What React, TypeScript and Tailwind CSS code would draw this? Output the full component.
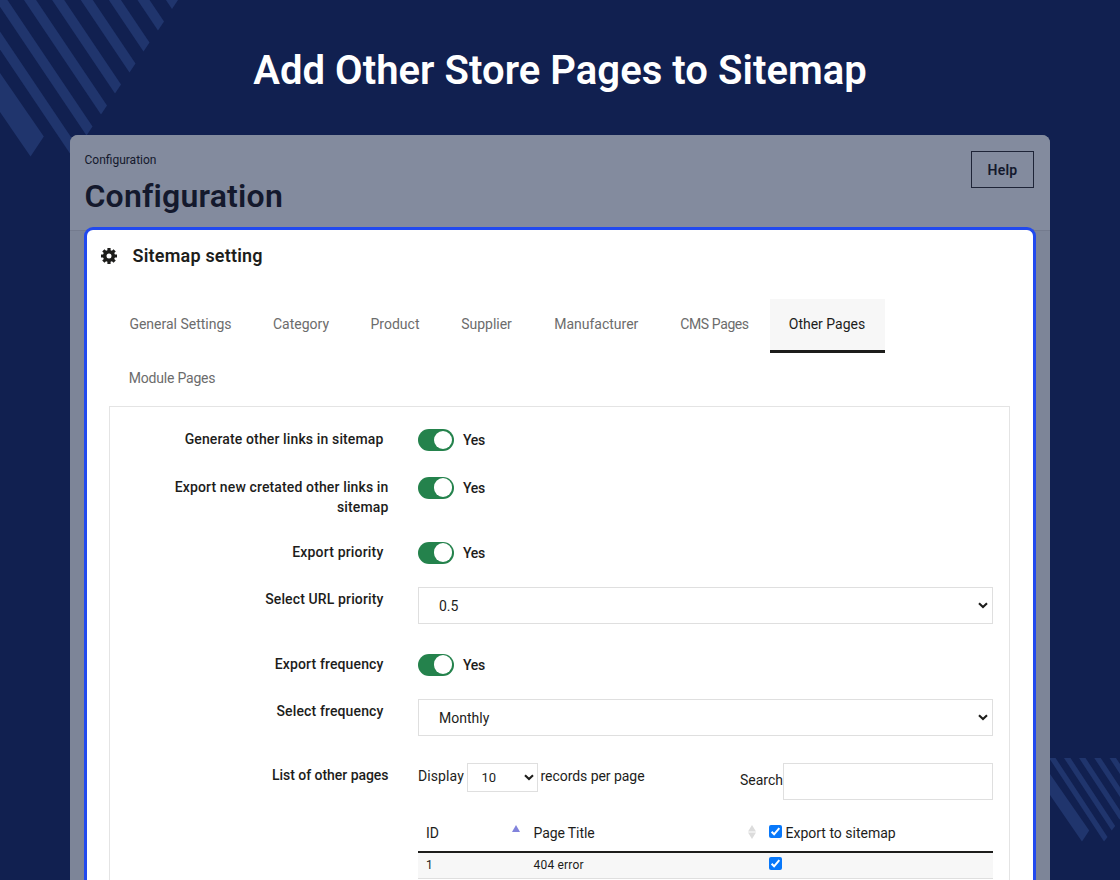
import React from 'react';

const tabs = [
  { label: 'General Settings', width: 'w-[143px]' },
  { label: 'Category', width: 'w-[98px]' },
  { label: 'Product', width: 'w-[90px]' },
  { label: 'Supplier', width: 'w-[93px]' },
  { label: 'Manufacturer', width: 'w-[126.5px]' },
  { label: 'CMS Pages', width: 'w-[110px]', text: 'tracking-[-0.4px]' },
  { label: 'Other Pages', width: 'w-[115px]', active: true },
  { label: 'Module Pages', width: 'w-[126px]', text: 'tracking-[-0.2px]' },
];

// right hand corner of every stripe
const topStripes = [[78, 147.5], [92.5, 126.5], [107, 105.5], [121, 84.5], [135.5, 63.5], [149.5, 42.5], [164, 21.5], [178, 0]];
const bottomStripes = [[57.5, 79], [65.2, 68], [73, 57], [81, 46], [89, 35]];

const Stripes: React.FC = () => (
  <>
    <svg className="absolute left-0 top-0" width="200" height="160" viewBox="0 0 200 160" fill="#20356d">
      <path d="M0 73 43.8 136.5 30.5 156.5 0 112z" />
      {topStripes.map(([x, y]) => (
        <path key={x} d={`M${x} ${y}l-6 9-200-297.4h12.1z`} />
      ))}
    </svg>
    <svg className="absolute left-[1050px] top-[758px]" width="70" height="90" viewBox="0 0 70 90" fill="#20356d">
      <path d="M0 16 39.2 72.5 32 83.5 0 37z" />
      {bottomStripes.map(([x, y]) => (
        <path key={x} d={`M${x} ${y}l-3.5 4.5-100-152h6.5z`} />
      ))}
    </svg>
  </>
);

const Gear: React.FC = () => (
  <svg className="mt-[4px]" width="16" height="16" viewBox="0 0 16 16" stroke="#1d1d1b">
    <circle cx="8" cy="8" r="4.3" fill="none" strokeWidth="3.6" />
    {[0, 45, 90, 135].map((angle) => (
      <path key={angle} d="M8 0v3M8 13v3" strokeWidth="3.2" transform={`rotate(${angle} 8 8)`} />
    ))}
  </svg>
);

const Toggle: React.FC = () => (
  <div className="-mt-px flex items-center">
    <span className="flex h-[22px] w-[35.5px] items-center justify-end rounded-full bg-[#24824c] pr-[1.5px]">
      <span className="size-[18.5px] rounded-full bg-white" />
    </span>
    <span className="ml-[9.5px] mt-px font-medium tracking-[-0.3px]">Yes</span>
  </div>
);

const Chevron: React.FC = () => (
  <svg width="10" height="7" viewBox="0 0 10 7" fill="none" stroke="#1d1d1b" strokeWidth="2.1">
    <path d="M1 1.2 5 5 9 1.2" />
  </svg>
);

const Select: React.FC<{ value: string }> = ({ value }) => (
  <div className="-mt-[3px] flex h-[37px] w-[575px] items-center justify-between border border-[#dfdfdf] pl-5 pr-[4px]">
    <span className="pt-px">{value}</span>
    <Chevron />
  </div>
);

const Check: React.FC = () => (
  <span className="flex size-[13px] shrink-0 items-center justify-center rounded-[2px] bg-[#0878fa]">
    <svg width="11" height="11" viewBox="0 0 11 11" fill="none" stroke="#fff" strokeWidth="2">
      <path d="M1.6 5.8 4.1 8.3 9.3 2.2" />
    </svg>
  </span>
);

const Row: React.FC<{ label: string; height: string; wide?: boolean; spacing?: string; children: React.ReactNode }> = ({
  label,
  height,
  wide,
  spacing = 'tracking-[0.13px]',
  children,
}) => (
  <div className={`flex ${height}`}>
    <div className={`-mt-px shrink-0 text-right font-medium leading-5 ${spacing} ${wide ? 'mr-[29.5px] w-[278.5px] pl-14' : 'mr-[34.5px] w-[273.5px]'}`}>
      {label}
    </div>
    <div>{children}</div>
  </div>
);

const PagesTable: React.FC = () => (
  <div className="-mt-[3px] w-[575px]">
    <div className="flex items-start justify-between">
      <div className="flex items-center">
        <span className="-mt-[3px] w-[49px] tracking-[0.1px]">Display</span>
        <div className="flex h-[29px] w-[70.5px] items-center justify-between border border-[#dfdfdf] pl-[13.5px] pr-[3px] text-[13px]">
          <span>10</span>
          <Chevron />
        </div>
        <span className="-mt-[3px] ml-[3px] tracking-[-0.05px]">records per page</span>
      </div>
      <div className="flex items-center">
        <span className="-mt-[3px]">Search</span>
        <div className="h-[37px] w-[210px] border border-[#dfdfdf]" />
      </div>
    </div>
    <div className="mt-[13px] flex h-[39.5px] items-center border-b-2 border-[#1d1d1b] pl-2 pt-[3px]">
      <div className="flex w-[107.5px] items-center justify-between pr-[14px]">
        <span>ID</span>
        <svg className="-mt-[9px]" width="8" height="7" viewBox="0 0 8 7" fill="#8183dc">
          <path d="M4 0 8 7H0z" />
        </svg>
      </div>
      <div className="flex w-[235.5px] items-center justify-between pr-[13px]">
        <span className="tracking-[-0.1px]">Page Title</span>
        <svg className="-mt-[2px]" width="8" height="14" viewBox="0 0 8 14" fill="#dcdcdc">
          <path d="M4 0 8 6.5H0zM0 7.5h8L4 14z" />
        </svg>
      </div>
      <div className="flex items-center">
        <span className="-mt-[4px]"><Check /></span>
        <span className="ml-[3.5px]">Export to sitemap</span>
      </div>
    </div>
    <div className="flex h-[26px] items-center border-b border-[#dfdfdf] bg-[#f7f7f7] pl-2 text-[12px]">
      <span className="w-[107.5px]">1</span>
      <span className="w-[235.5px] tracking-[0.2px]">404 error</span>
      <span className="-mt-1"><Check /></span>
    </div>
    <div className="h-8" />
  </div>
);

const App: React.FC = () => {
  return (
    <div className="relative h-[880px] w-[1120px] overflow-hidden bg-[#112050] font-['Roboto',sans-serif] text-[14px] text-[#363a41]">
      <Stripes />
      <h1 className="h-[135px] pt-[47px] text-center text-[40px] font-semibold leading-[48px] tracking-[0.05px] text-white">
        Add Other Store Pages to Sitemap
      </h1>

      <div className="relative mx-auto h-[745px] w-[980px] rounded-t-lg bg-[#7d8598]">
        {/* Page header */}
        <header className="flex h-[96px] items-start justify-between rounded-t-lg border-b border-[#747b8e] bg-[#838b9e] pl-[14.5px] pr-4 pt-4 text-[#14192d]">
          <div>
            <p className="pt-px text-[12px] leading-[17px]">Configuration</p>
            <h2 className="mt-[7px] text-[32px] font-semibold leading-10 tracking-[0.2px]">Configuration</h2>
          </div>
          <div className="flex h-[37px] w-[63px] items-center justify-center border border-[#1e2437] pt-px font-semibold tracking-[0.25px]">
            Help
          </div>
        </header>

        {/* Settings panel */}
        <main className="-mt-[4px] ml-[14px] h-[670px] w-[952px] rounded-t-[9px] border-x-3 border-t-3 border-[#2149ee] bg-white text-[#2b2b29]">
          <div className="flex h-[69px] items-start pl-[14px] pt-[14px] text-[#1d1d1b]">
            <Gear />
            <h3 className="ml-[15.5px] text-[18px] font-semibold leading-6 tracking-[0.2px]">Sitemap setting</h3>
          </div>

          <nav className="ml-[22px] flex w-[880px] flex-wrap">
            {tabs.map((tab) => (
              <div
                key={tab.label}
                className={`flex h-[54px] items-center justify-center border-b-3 ${tab.width} ${tab.text ?? ''} ${
                  tab.active ? 'border-[#1d1d1b] bg-[#f7f7f7] text-[#1d1d1b]' : 'border-transparent text-[#6c6c6c]'
                }`}
              >
                {tab.label}
              </div>
            ))}
          </nav>

          <section className="-mt-px ml-[22px] h-[500px] w-[901px] border border-[#e4e4e4] pt-[23px] text-[#1d1d1b]">
            <Row label="Generate other links in sitemap" height="h-[47.5px]"><Toggle /></Row>
            <Row label="Export new cretated other links in sitemap" height="h-[65px]" wide><Toggle /></Row>
            <Row label="Export priority" height="h-[47.5px]" spacing="tracking-[0.18px]"><Toggle /></Row>
            <Row label="Select URL priority" height="h-[64.5px]"><Select value="0.5" /></Row>
            <Row label="Export frequency" height="h-[47.5px]"><Toggle /></Row>
            <Row label="Select frequency" height="h-[64px]"><Select value="Monthly" /></Row>
            <Row label="List of other pages" height="h-[160px]" wide spacing="tracking-[-0.04px]"><PagesTable /></Row>
          </section>
        </main>
      </div>
    </div>
  );
};

export default App;
